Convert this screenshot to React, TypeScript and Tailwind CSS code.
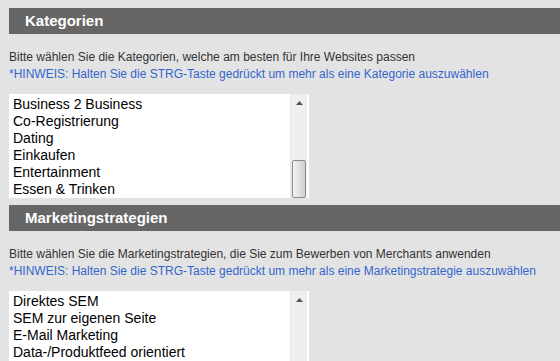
const KATEGORIEN = [
  'Business 2 Business',
  'Co-Registrierung',
  'Dating',
  'Einkaufen',
  'Entertainment',
  'Essen & Trinken',
];

const STRATEGIEN = [
  'Direktes SEM',
  'SEM zur eigenen Seite',
  'E-Mail Marketing',
  'Data-/Produktfeed orientiert',
];

function Scrollbar({ thumb }: { thumb: boolean }) {
  return (
    <div className="w-[17px] bg-[#efefef] border-l border-[#e6e6e6] flex flex-col">
      <div className="h-[17px] flex items-center justify-center">
        <svg width="7" height="4" viewBox="0 0 7 4">
          <path d="M3.5 0 L7 4 L0 4 Z" fill="#555" />
        </svg>
      </div>
      <div className="flex-1" />
      {thumb && (
        <div className="h-[38px] mx-[1px] rounded-[2px] border border-[#8a8a8a] bg-gradient-to-r from-[#f4f4f4] via-[#e2e2e2] to-[#cfcfcf]" />
      )}
    </div>
  );
}

function Section({
  title,
  text,
  hint,
  items,
  thumb,
}: {
  title: string;
  text: string;
  hint: string;
  items: string[];
  thumb: boolean;
}) {
  return (
    <div>
      {/* Header */}
      <div className="h-[26px] bg-[#666666] flex items-center pl-4">
        <span className="text-white font-bold text-[15px]">{title}</span>
      </div>

      <p className="mt-[15px] text-[12px] leading-[17px] text-[#333] whitespace-nowrap">{text}</p>
      <p className="text-[12px] leading-[17px] text-[#3366cc] whitespace-nowrap">{hint}</p>

      {/* Listbox */}
      <div className="mt-[11px] w-[300px] h-[104px] bg-white flex overflow-hidden">
        <div className="flex-1 pl-1 pt-[2px]">
          {items.map(i => (
            <div key={i} className="text-[14px] leading-[17px] text-black whitespace-nowrap">
              {i}
            </div>
          ))}
        </div>
        <div className="flex pr-[2px]">
          <Scrollbar thumb={thumb} />
        </div>
      </div>
    </div>
  );
}

export default function App() {
  return (
    <div
      className="w-[560px] h-[361px] bg-[#e3e3e3] pl-[9px] pt-[8px] overflow-hidden flex flex-col gap-[7px]"
      style={{ fontFamily: '"Liberation Sans", Arial, sans-serif' }}
    >
      <Section
        title="Kategorien"
        text="Bitte wählen Sie die Kategorien, welche am besten für Ihre Websites passen"
        hint="*HINWEIS: Halten Sie die STRG-Taste gedrückt um mehr als eine Kategorie auszuwählen"
        items={KATEGORIEN}
        thumb
      />
      <Section
        title="Marketingstrategien"
        text="Bitte wählen Sie die Marketingstrategien, die Sie zum Bewerben von Merchants anwenden"
        hint="*HINWEIS: Halten Sie die STRG-Taste gedrückt um mehr als eine Marketingstrategie auszuwählen"
        items={STRATEGIEN}
        thumb={false}
      />
    </div>
  );
}
